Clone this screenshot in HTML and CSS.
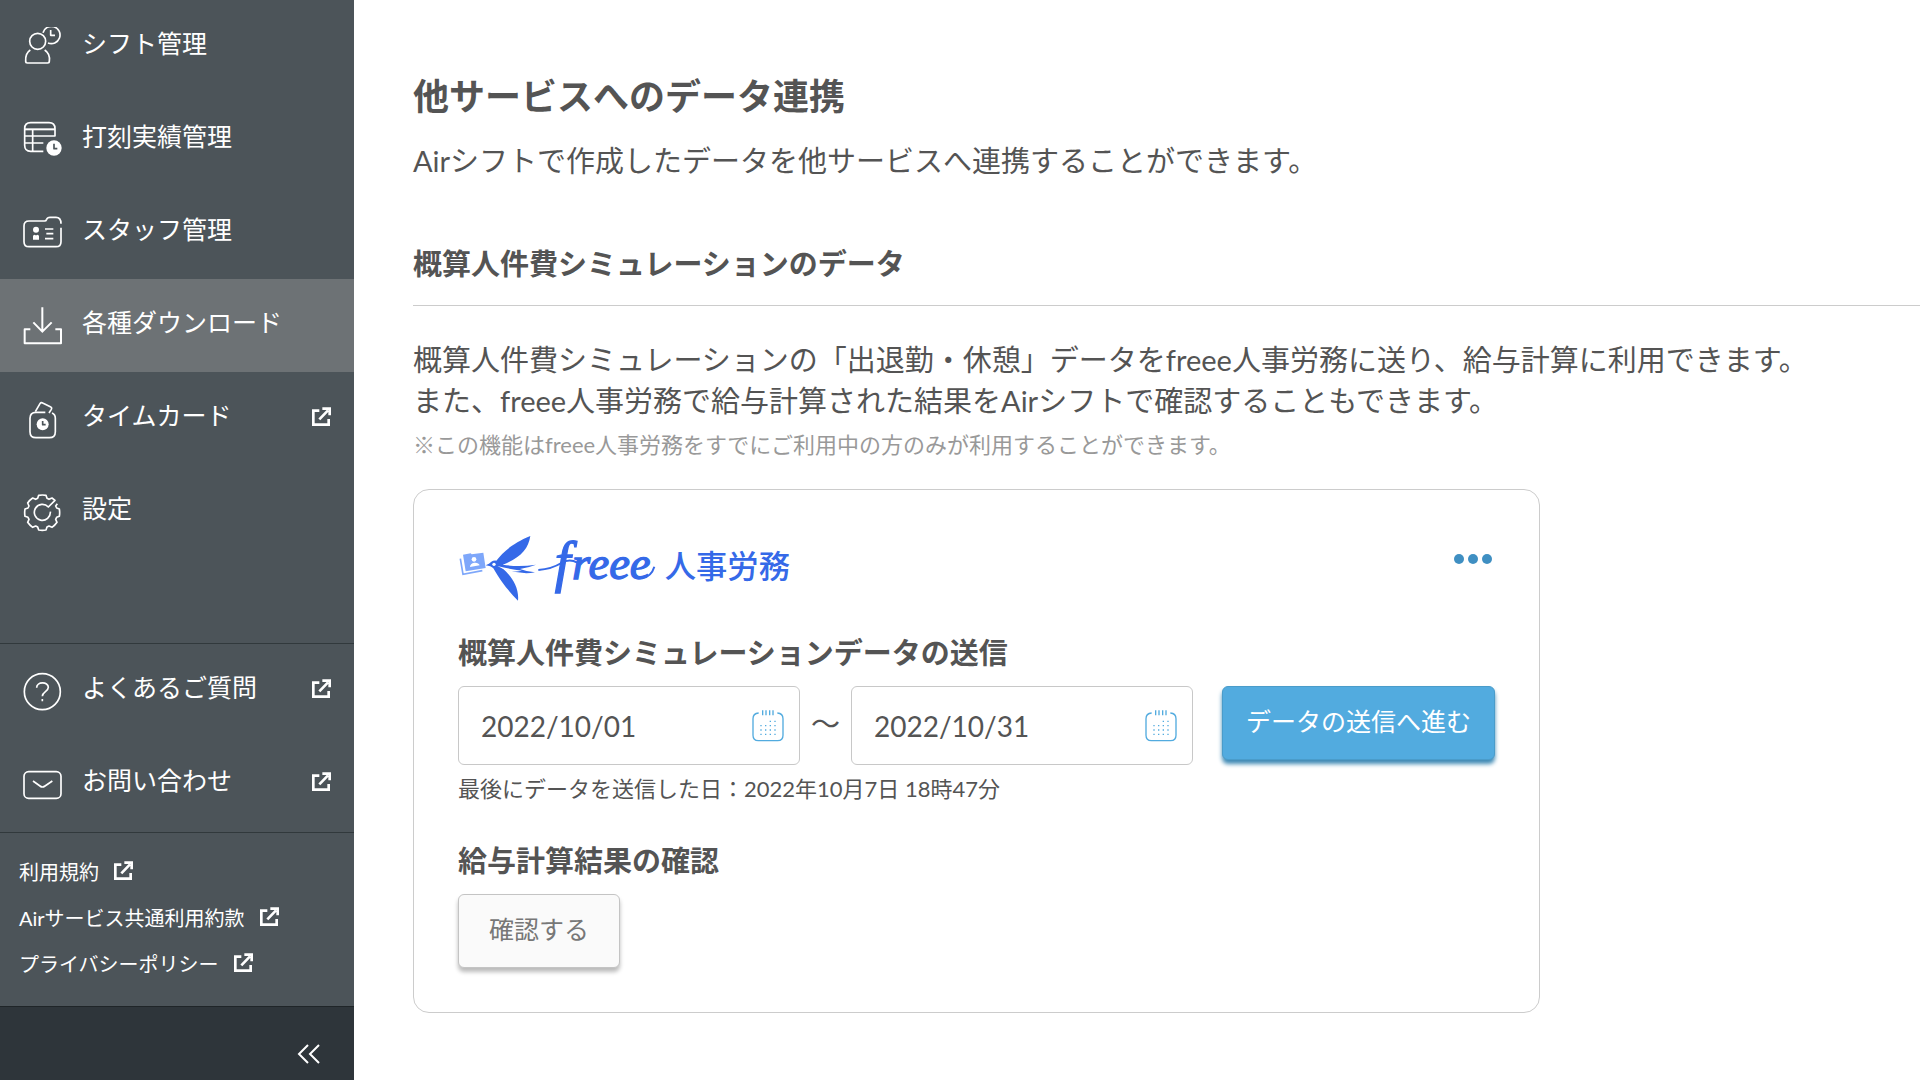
FILE: index.html
```html
<!DOCTYPE html>
<html lang="ja">
<head>
  <meta charset="UTF-8" />
  <meta name="viewport" content="width=device-width, initial-scale=1.0"/>
  <title>他サービスへのデータ連携</title>
  <link rel="stylesheet" href="styles.css">
</head>
<body>

  <!-- shared icons -->
  <svg class="defs" aria-hidden="true">
    <symbol id="external" viewBox="0 0 57 57">
      <path d="M22 11H4V53H50V36M22 37L48 10M31 5H53V25" fill="none" stroke="currentColor" stroke-width="8"/>
    </symbol>
    <symbol id="calendar" viewBox="0 0 96 96">
      <path d="M20 9Q3 10 3 26V76Q3 92 19 92H77Q93 92 93 76V26Q93 10 76 9" fill="none" stroke="currentColor" stroke-width="4"/>
      <path d="M32 1V16M42 1V16M53 1V16M63 1V16" stroke="currentColor" stroke-width="4"/>
      <path d="M53 34h20M25 47h48M25 60h48M25 73h48" stroke="currentColor" stroke-width="4" stroke-dasharray="4 10"/>
    </symbol>
  </svg>

  <aside class="sidebar">
    <nav class="nav">
      <a class="nav-item" href="#">
        <svg class="nav-icon" viewBox="0 0 120 120">
          <circle cx="47" cy="43" r="24"/>
          <path d="M25 69C14 76 10 88 11 103Q11 108 16 108H77Q82 108 82 103C84 88 79 76 68 69"/>
          <path d="M63 17A26 26 0 1 1 78 48M86 9V25H99"/>
        </svg>
        <span class="nav-label">シフト管理</span>
      </a>
      <a class="nav-item" href="#">
        <svg class="nav-icon" viewBox="0 0 120 120">
          <path d="M64 94H26Q8 94 8 76V26Q8 8 26 8H81Q99 8 99 26V48H8M8 69H64M32 28V94"/>
          <path d="M8 28H99" stroke-width="6"/>
          <circle class="solid" cx="96" cy="84" r="23"/>
          <path class="hands" d="M96 71V86H106"/>
        </svg>
        <span class="nav-label">打刻実績管理</span>
      </a>
      <a class="nav-item" href="#">
        <svg class="nav-icon" viewBox="0 0 120 120">
          <path d="M117 44V86Q117 101 102 101H21Q6 101 6 86V39Q6 24 21 24H68Q72 24 74 19Q76 13 84 13H102Q117 13 117 32"/>
          <circle class="solid" cx="42" cy="50" r="9"/>
          <path class="solid" d="M33 80V70Q33 65 38 65Q42 68 46 65Q51 65 51 70V80Z"/>
          <path d="M69 48H94M73 62H94M69 77H94"/>
        </svg>
        <span class="nav-label">スタッフ管理</span>
      </a>
      <a class="nav-item active" href="#">
        <svg class="nav-icon" viewBox="0 0 120 120">
          <path d="M61 4V76M34 49L61 77L89 49M25 70H8V112H117V70H100" stroke-width="6"/>
        </svg>
        <span class="nav-label">各種ダウンロード</span>
      </a>
      <a class="nav-item" href="#">
        <svg class="nav-icon" viewBox="0 0 120 120">
          <path d="M70 40H42Q24 40 24 58V98Q24 116 42 116H82Q100 116 100 98V58Q100 46 90 42"/>
          <path d="M40 38L54 14Q57 9 62 12L85 23Q91 26 88 31L81 42"/>
          <circle class="solid" cx="62" cy="76" r="18"/>
          <path class="hands" d="M62 66V77H71"/>
        </svg>
        <span class="nav-label">タイムカード</span>
        <svg class="external"><use href="#external"/></svg>
      </a>
      <a class="nav-item" href="#">
        <svg class="nav-icon" viewBox="0 0 120 120">
          <path d="M106 35L101 42L104 48L112 51Q114 62 112 73L104 76L101 82L105 91Q99 100 90 106L81 102L75 105L72 114Q61 116 50 114L47 105L41 102L32 106Q23 100 17 91L21 82L18 76L9 73Q7 62 9 51L18 48L21 42L17 33Q23 24 32 18L41 22L47 19L50 10Q61 8 72 10L75 19L81 22L90 18L99 25L79 45A24 24 0 1 0 85 59"/>
        </svg>
        <span class="nav-label">設定</span>
      </a>
    </nav>

    <nav class="nav nav-help">
      <a class="nav-item" href="#">
        <svg class="nav-icon" viewBox="0 0 120 120">
          <circle cx="61" cy="62" r="54"/>
          <path d="M44 50C44 31 79 31 79 49C79 62 61 62 61 76M61 84V91"/>
        </svg>
        <span class="nav-label">よくあるご質問</span>
        <svg class="external"><use href="#external"/></svg>
      </a>
      <a class="nav-item" href="#">
        <svg class="nav-icon" viewBox="0 0 120 120">
          <rect x="6" y="23" width="111" height="80" rx="14"/>
          <path d="M33 51L54 66Q61 72 69 66L91 51"/>
        </svg>
        <span class="nav-label">お問い合わせ</span>
        <svg class="external"><use href="#external"/></svg>
      </a>
    </nav>

    <div class="terms">
      <a class="terms-link" href="#">利用規約<svg class="external"><use href="#external"/></svg></a>
      <a class="terms-link" href="#">Airサービス共通利用約款<svg class="external"><use href="#external"/></svg></a>
      <a class="terms-link" href="#">プライバシーポリシー<svg class="external"><use href="#external"/></svg></a>
    </div>

    <div class="collapse">
      <button class="collapse-btn" type="button" aria-label="メニューを閉じる">
        <svg width="24" height="20" viewBox="0 0 24 20"><path d="M11 1L2 10L11 19M22 1L13 10L22 19" fill="none" stroke="currentColor" stroke-width="2"/></svg>
      </button>
    </div>
  </aside>

  <main class="main">
    <h1 class="page-title">他サービスへのデータ連携</h1>
    <p class="lead">Airシフトで作成したデータを他サービスへ連携することができます。</p>

    <h2 class="section-title">概算人件費シミュレーションのデータ</h2>
    <p class="text">概算人件費シミュレーションの「出退勤・休憩」データをfreee人事労務に送り、給与計算に利用できます。<br>また、freee人事労務で給与計算された結果をAirシフトで確認することもできます。</p>
    <p class="note">※この機能はfreee人事労務をすでにご利用中の方のみが利用することができます。</p>

    <section class="card">
      <div class="card-head">
        <svg class="logo" viewBox="54 36 1014 216" role="img" aria-label="freee 人事労務">
          <!-- folder -->
          <path d="M69 104L92 100L95 103L130 98L137 144L77 154Z" fill="#7ea7fa"/>
          <path d="M61 116L69 163L127 152" fill="none" stroke="#7ea7fa" stroke-width="5"/>
          <circle cx="102" cy="118" r="7" fill="#fff"/>
          <path d="M90 141Q90 130 103 128Q116 127 119 136Z" fill="#fff"/>
          <!-- swallow -->
          <path d="M137 136Q148 131 154 125Q160 121 169 122C188 98 213 72 271 48C265 88 240 114 188 134Q235 142 288 134Q265 143 240 147Q260 155 285 157Q240 166 186 143C214 168 238 200 234 242C209 216 187 192 160 145Q153 138 137 136Z" fill="#3569e8"/>
          <path d="M172 138Q210 148 246 152Q208 160 172 138Z" fill="#fff"/>
          <circle cx="162" cy="133" r="5" fill="#fff"/>
          <!-- wordmark -->
          <path d="M295 150Q335 147 364 129Q388 114 412 128" fill="none" stroke="#3569e8" stroke-width="6"/>
          <text class="logo-word logo-f" x="344" y="184">f</text>
          <text class="logo-word" x="396" y="176">reee</text>
          <path d="M606 175Q634 170 643 140" fill="none" stroke="#3569e8" stroke-width="6"/>
          <text class="logo-name" x="674" y="175">人事労務</text>
        </svg>
        <button class="more" type="button" aria-label="メニュー">
          <svg width="38" height="10" viewBox="0 0 38 10"><circle cx="5" cy="5" r="5"/><circle cx="19" cy="5" r="5"/><circle cx="33" cy="5" r="5"/></svg>
        </button>
      </div>

      <h3 class="card-title">概算人件費シミュレーションデータの送信</h3>
      <form class="send-form">
        <div class="date-box">
          <input class="date-input" type="text" value="2022/10/01" aria-label="開始日">
          <svg class="calendar"><use href="#calendar"/></svg>
        </div>
        <span class="tilde">〜</span>
        <div class="date-box">
          <input class="date-input" type="text" value="2022/10/31" aria-label="終了日">
          <svg class="calendar"><use href="#calendar"/></svg>
        </div>
        <button class="btn btn-primary" type="button">データの送信へ進む</button>
      </form>
      <p class="sent-at">最後にデータを送信した日：2022年10月7日 18時47分</p>

      <h3 class="card-title result-title">給与計算結果の確認</h3>
      <button class="btn btn-default" type="button">確認する</button>
    </section>
  </main>

</body>
</html>
```

FILE: styles.css
```css
* {
  box-sizing: border-box;
}

body {
  margin: 0;
  display: flex;
  min-height: 100vh;
  background-color: #fff;
  color: #545454;
  font-family: Lato, "Noto Sans CJK JP", sans-serif;
  font-size: 29px;
  line-height: 41px;
}

h1, h2, h3, p {
  margin: 0;
}

a {
  color: inherit;
  text-decoration: none;
}

button, input {
  font-family: inherit;
  color: inherit;
}

button {
  cursor: pointer;
}

.defs {
  position: absolute;
  width: 0;
  height: 0;
}

/* sidebar */
.sidebar {
  flex: 0 0 354px;
  display: flex;
  flex-direction: column;
  background-color: #4c5459;
  color: #fff;
}

.nav {
  padding-bottom: 85px;
}

.nav-help {
  padding-bottom: 2px;
  border-top: 1px solid #31393c;
}

.nav-item {
  display: flex;
  align-items: center;
  height: 93px;
  padding: 0 23px 0 22px;
  font-size: 25px;
}

.nav-item.active {
  background-color: #6d7275;
}

.nav-icon {
  flex: none;
  width: 40px;
  height: 40px;
  margin-right: 20px;
  fill: none;
  stroke: #fff;
  stroke-width: 5;
  stroke-linejoin: round;
}

.nav-icon .solid {
  fill: #fff;
  stroke: none;
}

.nav-icon .hands {
  stroke: #4c5459;
}

.nav-label {
  flex: 1;
  padding-bottom: 6px;
}

.external {
  flex: none;
  width: 19px;
  height: 19px;
  margin-bottom: 4px;
}

.terms {
  display: flex;
  flex-direction: column;
  align-items: flex-start;
  padding: 16px 19px 19px;
  border-top: 1px solid #31393c;
}

.terms-link {
  display: flex;
  align-items: center;
  gap: 15px;
  font-size: 20px;
  line-height: 46px;
}

.collapse {
  flex: 1;
  display: flex;
  justify-content: flex-end;
  align-items: flex-start;
  padding: 37px 33px 0;
  border-top: 1px solid #1f2528;
  background-color: #2e353a;
}

.collapse-btn {
  display: flex;
  padding: 0;
  border: 0;
  background: none;
}

/* main */
.main {
  flex: 1;
  min-width: 0;
  padding: 72px 0 60px 59px;
}

.page-title {
  font-size: 36px;
  line-height: 48px;
}

.lead {
  margin-top: 20px;
}

.section-title {
  margin-top: 62px;
  padding-bottom: 21px;
  border-bottom: 1px solid #ccc;
  font-size: 29px;
}

.text {
  margin-top: 33px;
}

.note {
  margin-top: 8px;
  color: #999;
  font-size: 22px;
  line-height: 32px;
}

.card {
  max-width: 1127px;
  margin-top: 28px;
  padding: 42px 44px 44px;
  border: 1px solid #ccc;
  border-radius: 16px;
}

.card-head {
  display: flex;
  justify-content: space-between;
  align-items: flex-start;
}

.logo {
  width: 338px;
  height: 72px;
}

.logo-word {
  font-family: "Liberation Serif", serif;
  font-size: 140px;
  font-style: italic;
  fill: #3569e8;
  stroke: #3569e8;
  stroke-width: 4;
}

.logo-f {
  font-size: 170px;
}

.logo-name {
  font-family: "Noto Sans CJK JP", sans-serif;
  font-size: 94px;
  font-weight: 500;
  fill: #3569e8;
}

.more {
  display: flex;
  padding: 22px 3px;
  border: 0;
  background: none;
  fill: #3f8fc2;
}

.card-title {
  margin-top: 28px;
  margin-bottom: 13px;
  font-size: 29px;
}

.send-form {
  display: flex;
  align-items: flex-start;
}

.date-box {
  flex: 1;
  display: flex;
  align-items: center;
  min-width: 0;
  height: 79px;
  padding: 0 15px 0 22px;
  border: 1px solid #c8c8c8;
  border-radius: 6px;
}

.date-input {
  flex: 1;
  min-width: 0;
  padding: 0;
  border: 0;
  outline: none;
  background: none;
  font-size: 28px;
}

.calendar {
  flex: none;
  width: 32px;
  height: 32px;
  color: #52abdf;
}

.tilde {
  flex: none;
  width: 51px;
  line-height: 75px;
  text-align: center;
}

.btn {
  height: 74px;
  padding: 0 23px 6px;
  border-radius: 6px;
  font-size: 25px;
  white-space: nowrap;
}

.btn-primary {
  flex: none;
  margin-left: 29px;
  border: 1px solid #4a9cca;
  background-color: #52abdf;
  box-shadow: 0 4px 4px #3f8ab5;
  color: #fff;
}

.btn-default {
  padding: 0 30px 6px;
  border: 1px solid #c4c4c4;
  background-color: #fafafa;
  box-shadow: 0 4px 4px #bbb;
  color: #777;
}

.sent-at {
  margin-top: 8px;
  font-size: 22px;
  line-height: 32px;
}

.result-title {
  margin-top: 35px;
}
```
